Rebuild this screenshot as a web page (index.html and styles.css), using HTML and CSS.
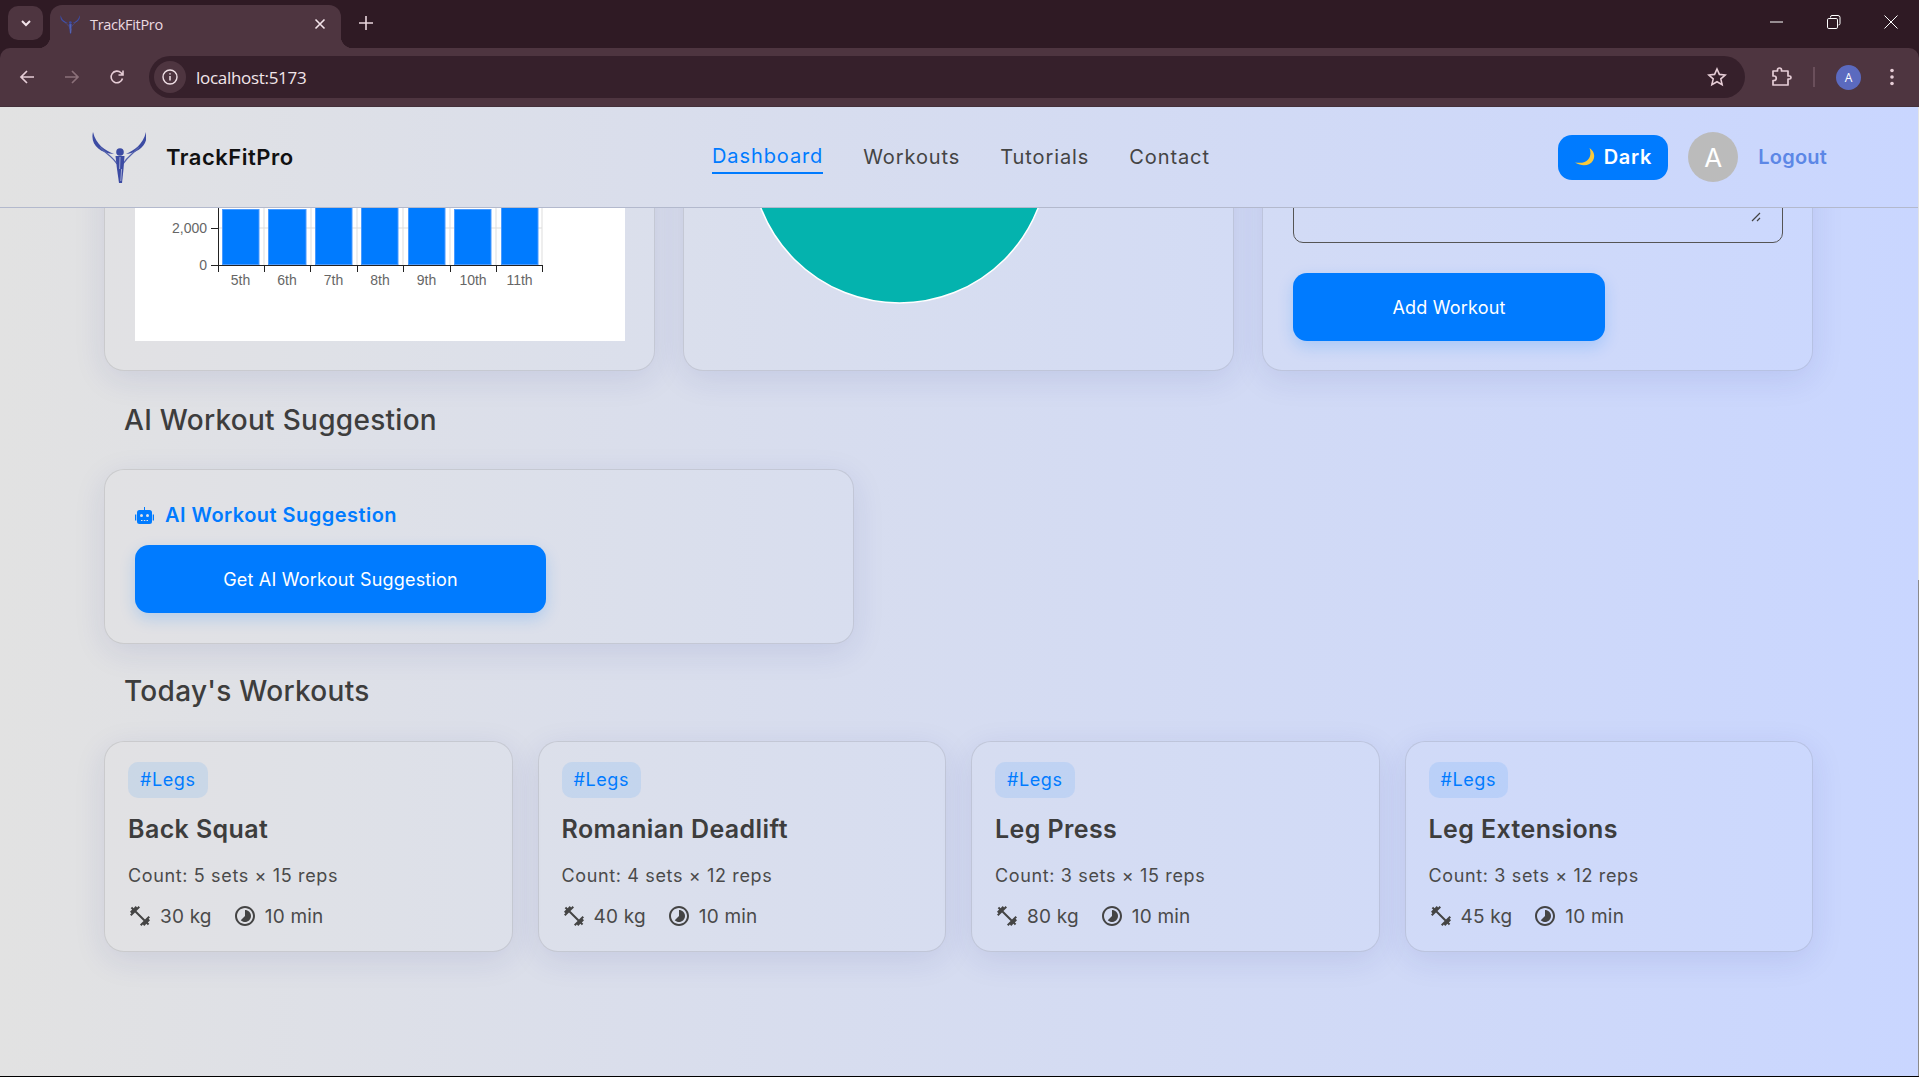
FILE: index.html
```html
<!DOCTYPE html>
<html lang="en">
  <head>
    <meta charset="UTF-8" />
    <title>TrackFitPro</title>
    <link rel="stylesheet" href="styles.css">
  </head>
  <body>
    <svg class="defs" width="0" height="0">
      <symbol id="logo" viewBox="0 0 54 53">
        <path d="M1 1C-2 13 7 22 22 23C13 19 4 14 1 1Z" fill="#3c4ba3" />
        <path d="M54 1C57 13 47 22 34 23C42 19 51 14 54 1Z" fill="#3c4ba3" />
        <path d="M8 16C14 23 20 25 25 33M47 16C41 23 36 25 31 33" fill="none" stroke="#5563ad" stroke-width="1.200" />
        <circle cx="28" cy="21" r="3.800" fill="#3c4ba3" />
        <path d="M23.500 25L32.500 25L31.500 38L30 52L27 52L25 38Z" fill="#3c4ba3" />
        <path d="M28 26L27.600 38M29.600 38L28.800 50" stroke="#cfd3e6" stroke-width=".7" />
      </symbol>
      <symbol id="weight" viewBox="0 0 24 24">
        <path d="M20.57 14.86 22 13.43 20.57 12 17 15.57 8.43 7 12 3.43 10.57 2 9.14 3.43 7.71 2 5.57 4.14 4.14 2.71 2.71 4.14l1.43 1.43L2 7.71l1.43 1.43L2 10.57 3.43 12 7 8.43 15.57 17 12 20.57 13.43 22l1.43-1.43L16.29 22l2.14-2.14 1.43 1.43 1.43-1.43-1.43-1.43L22 16.29z" />
      </symbol>
      <symbol id="timer" viewBox="0 0 24 24">
        <path d="M16.24 7.76C15.07 6.59 13.54 6 12 6v6l-4.24 4.24c2.34 2.34 6.14 2.34 8.49 0 2.34-2.34 2.34-6.14-.01-8.48zM12 2C6.48 2 2 6.48 2 12s4.48 10 10 10 10-4.48 10-10S17.52 2 12 2zm0 18c-4.42 0-8-3.58-8-8s3.58-8 8-8 8 3.58 8 8-3.58 8-8 8z" />
      </symbol>
    </svg>

    <div class="browser">
      <div class="tabstrip">
        <div class="tab-search">
          <svg width="14" height="14" viewBox="0 0 14 14"><path d="M3 5l4 4 4-4" fill="none" stroke="#f3e4ea" stroke-width="2" /></svg>
        </div>
        <div class="tab">
          <svg class="tab-icon" width="20" height="19"><use href="#logo" /></svg>
          <span class="tab-title">TrackFitPro</span>
          <svg class="tab-close" width="12" height="12" viewBox="0 0 12 12"><path d="M1.5 1.5l9 9M10.5 1.5l-9 9" stroke="#f3e4ea" stroke-width="1.6" /></svg>
        </div>
        <svg class="new-tab" width="14" height="14" viewBox="0 0 14 14"><path d="M7 0v14M0 7h14" stroke="#e9d5dc" stroke-width="1.6" /></svg>
        <div class="window-btns">
          <svg width="14" height="14" viewBox="0 0 14 14"><path d="M0 7h13" stroke="#fff" stroke-width="1" /></svg>
          <svg width="14" height="14" viewBox="0 0 14 14"><path d="M3.5 2.5V2a1.5 1.5 0 0 1 1.5-1.5h6A2 2 0 0 1 13 2.500v6A1.500 1.500 0 0 1 11.500 10M1.800 3.500h7.400a1.300 1.300 0 0 1 1.300 1.300v7.400a1.300 1.300 0 0 1-1.300 1.300H1.800a1.300 1.300 0 0 1-1.300-1.300V4.800a1.300 1.300 0 0 1 1.300-1.300z" fill="none" stroke="#fff" /></svg>
          <svg width="14" height="14" viewBox="0 0 14 14"><path d="M.5.500l13 13M13.500.500l-13 13" stroke="#fff" /></svg>
        </div>
      </div>

      <div class="toolbar">
        <svg class="tool" width="16" height="16" viewBox="0 0 16 16"><path d="M15 8H2M8 2L2 8l6 6" fill="none" stroke="#e6cdd6" stroke-width="1.700" /></svg>
        <svg class="tool" width="16" height="16" viewBox="0 0 16 16"><path d="M1 8h13M8 2l6 6-6 6" fill="none" stroke="#8b7079" stroke-width="1.700" /></svg>
        <svg class="tool" width="16" height="16" viewBox="0 0 16 16"><path d="M13.500 9.500A5.800 5.800 0 1 1 12 3.800L14 6M14 1.500V6H9.500" fill="none" stroke="#e6cdd6" stroke-width="1.600" /></svg>
        <div class="omnibox">
          <span class="site-info">
            <svg width="16" height="16" viewBox="0 0 16 16"><circle cx="8" cy="8" r="7" fill="none" stroke="#f0e0e6" stroke-width="1.400" /><path d="M8 7v4.500M8 4.200v1.400" stroke="#f0e0e6" stroke-width="1.500" /></svg>
          </span>
          <span class="url">localhost:5173</span>
          <svg class="star" width="20" height="20" viewBox="0 0 20 20"><path d="M10 2l2.400 5.400 5.800.6-4.400 3.900 1.300 5.800L10 14.700l-5.100 3 1.300-5.800L1.800 8l5.800-.6z" fill="none" stroke="#e6cdd6" stroke-width="1.600" /></svg>
        </div>
        <svg class="ext" width="21" height="20" viewBox="0 0 21 20"><path d="M2 4h4.500V3a2 2 0 0 1 4 0v1H17v5h1.500a1.500 1.500 0 0 1 0 3H17v6H2v-4.500h1a2.200 2.200 0 0 0 0-4.500H2z" fill="none" stroke="#e6cdd6" stroke-width="1.700" stroke-linejoin="round" /></svg>
        <span class="tool-sep"></span>
        <span class="profile">A</span>
        <svg class="kebab" width="4" height="18" viewBox="0 0 4 18"><circle cx="2" cy="2.500" r="1.800" fill="#e6cdd6" /><circle cx="2" cy="9" r="1.800" fill="#e6cdd6" /><circle cx="2" cy="15.500" r="1.800" fill="#e6cdd6" /></svg>
      </div>

      <div class="page">
        <header class="topbar">
          <div class="brand">
            <svg class="brand-logo" width="54" height="53"><use href="#logo" /></svg>
            <span class="brand-name">TrackFitPro</span>
          </div>
          <nav class="nav">
            <a class="nav-link active">Dashboard</a>
            <a class="nav-link">Workouts</a>
            <a class="nav-link">Tutorials</a>
            <a class="nav-link">Contact</a>
          </nav>
          <div class="user-area">
            <button class="theme-btn">
              <svg width="20" height="18" viewBox="0 0 20 18"><path d="M14.500 0C19 3 20.500 8 18 12.500C15.500 17 8 19.500 0 14.500C6 15.500 11 14.500 13.500 11C15.800 7.800 16 4 14.500 0Z" fill="#f8c93c" /></svg>
              Dark
            </button>
            <span class="avatar">A</span>
            <a class="logout">Logout</a>
          </div>
        </header>

        <main class="content">
          <section class="top-grid">
            <div class="card chart-card">
              <svg class="chart" width="490" height="240" viewBox="0 0 490 240">
                <g stroke="#ddd">
                  <path d="M129 0V164M176 0V164M222 0V164M268 0V164M315 0V164M361 0V164M407 0V164" />
                  <path d="M83 127H407" />
                </g>
                <g fill="#007bff" stroke="#4a9bff">
                  <rect x="87.500" y="108.500" width="36.500" height="55" />
                  <rect x="133.500" y="108.500" width="37.500" height="55" />
                  <rect x="180.500" y="90.500" width="36.500" height="73" />
                  <rect x="226.500" y="90.500" width="36.500" height="73" />
                  <rect x="273.500" y="90.500" width="36.500" height="73" />
                  <rect x="319.500" y="108.500" width="36.500" height="55" />
                  <rect x="366.500" y="90.500" width="36.500" height="73" />
                </g>
                <path d="M83.500 0V171M76 127.500H83M76 164.500H407.500M129.500 164V171M175.500 164V171M222.500 164V171M268.500 164V171M315.500 164V171M361.500 164V171M407.500 164V171" fill="none" stroke="#222" />
                <g class="tick-y">
                  <text x="72" y="132">2,000</text>
                  <text x="72" y="169">0</text>
                </g>
                <g class="tick-x">
                  <text x="105.500" y="184">5th</text>
                  <text x="152" y="184">6th</text>
                  <text x="198.500" y="184">7th</text>
                  <text x="245" y="184">8th</text>
                  <text x="291.500" y="184">9th</text>
                  <text x="338" y="184">10th</text>
                  <text x="384.500" y="184">11th</text>
                </g>
              </svg>
            </div>
            <div class="card">
              <svg class="pie" width="490" height="240" viewBox="0 0 490 240">
                <circle cx="185.500" cy="53.400" r="148.600" fill="#04b3ae" stroke="#fff" stroke-width="1.500" />
              </svg>
            </div>
            <div class="card form-card">
              <div class="notes-wrap">
                <textarea class="notes"></textarea>
                <svg class="grip" width="10" height="10" viewBox="0 0 10 10"><path d="M1 9L9 1M6 9L9 6" stroke="#444" stroke-width="1.200" /></svg>
              </div>
              <button class="primary-btn add-btn">Add Workout</button>
            </div>
          </section>

          <h2 class="section-title">AI Workout Suggestion</h2>
          <section class="card ai-card">
            <h3 class="ai-title">
              <svg width="19" height="17" viewBox="0 0 19 17">
                <path d="M9 0h1v3H9zM4.500 3h10A2.500 2.500 0 0 1 17 5.500V14.500A2.500 2.500 0 0 1 14.500 17H4.500A2.500 2.500 0 0 1 2 14.500V5.500A2.500 2.500 0 0 1 4.500 3zM0 7.500h1.300v6H0zM17.700 7.500H19v6h-1.300z" fill="#007bff" />
                <circle cx="6.500" cy="8.500" r="1.500" fill="#dfe1e7" />
                <circle cx="12.500" cy="8.500" r="1.500" fill="#dfe1e7" />
                <path d="M6 13h1.500v1H6zM8.800 13h1.500v1H8.800zM11.500 13H13v1h-1.500z" fill="#dfe1e7" />
              </svg>
              AI Workout Suggestion
            </h3>
            <button class="primary-btn ai-btn">Get AI Workout Suggestion</button>
          </section>

          <h2 class="section-title today-title">Today's Workouts</h2>
          <section class="workout-grid">
            <article class="card workout">
              <span class="tag">#Legs</span>
              <h3 class="workout-name">Back Squat</h3>
              <p class="workout-count">Count: 5 sets × 15 reps</p>
              <div class="workout-meta">
                <svg width="24" height="24"><use href="#weight" /></svg><span>30 kg</span>
                <svg class="meta-clock" width="24" height="24"><use href="#timer" /></svg><span>10 min</span>
              </div>
            </article>
            <article class="card workout">
              <span class="tag">#Legs</span>
              <h3 class="workout-name">Romanian Deadlift</h3>
              <p class="workout-count">Count: 4 sets × 12 reps</p>
              <div class="workout-meta">
                <svg width="24" height="24"><use href="#weight" /></svg><span>40 kg</span>
                <svg class="meta-clock" width="24" height="24"><use href="#timer" /></svg><span>10 min</span>
              </div>
            </article>
            <article class="card workout">
              <span class="tag">#Legs</span>
              <h3 class="workout-name">Leg Press</h3>
              <p class="workout-count">Count: 3 sets × 15 reps</p>
              <div class="workout-meta">
                <svg width="24" height="24"><use href="#weight" /></svg><span>80 kg</span>
                <svg class="meta-clock" width="24" height="24"><use href="#timer" /></svg><span>10 min</span>
              </div>
            </article>
            <article class="card workout">
              <span class="tag">#Legs</span>
              <h3 class="workout-name">Leg Extensions</h3>
              <p class="workout-count">Count: 3 sets × 12 reps</p>
              <div class="workout-meta">
                <svg width="24" height="24"><use href="#weight" /></svg><span>45 kg</span>
                <svg class="meta-clock" width="24" height="24"><use href="#timer" /></svg><span>10 min</span>
              </div>
            </article>
          </section>
        </main>
        <span class="scroll-thumb"></span>
      </div>
    </div>
  </body>
</html>
```

FILE: styles.css
```css
* {
  box-sizing: border-box;
}
html,
body {
  margin: 0;
  height: 1077px;
  overflow: hidden;
}
body {
  font-family: Inter, "Noto Sans", sans-serif;
  color: #3d3d3d;
}
.defs {
  display: block;
  height: 0;
}
button {
  font-family: inherit;
  border: none;
}

/* browser frame */
.browser {
  display: flex;
  flex-direction: column;
  height: 1077px;
  background: #2f1a24;
}
.tabstrip {
  display: flex;
  align-items: flex-end;
  height: 48px;
  padding-left: 8px;
}
.tab-search {
  display: flex;
  align-items: center;
  justify-content: center;
  width: 35px;
  height: 34px;
  margin-bottom: 8px;
  border-radius: 10px;
  background: #4e3540;
}
.tab {
  position: relative;
  display: flex;
  align-items: center;
  width: 291px;
  height: 43px;
  margin-left: 7px;
  padding: 0 15px 5px 10px;
  border-radius: 12px 12px 0 0;
  background: #4e3540;
}
.tab::before,
.tab::after {
  content: "";
  position: absolute;
  bottom: 0;
  width: 12px;
  height: 12px;
}
.tab::before {
  left: -12px;
  background: radial-gradient(circle at 0 0, transparent 12px, #4e3540 12.5px);
}
.tab::after {
  right: -12px;
  background: radial-gradient(circle at 100% 0, transparent 12px, #4e3540 12.5px);
}
.tab-title {
  margin-left: 10px;
  font: 14.5px "Open Sans", sans-serif;
  letter-spacing: -0.3px;
  color: #ecdae0;
}
.tab-close {
  margin-left: auto;
}
.new-tab {
  margin: 0 0 18px 18px;
}
.window-btns {
  display: flex;
  align-items: center;
  gap: 43px;
  margin: 0 21px 19px auto;
}
.toolbar {
  display: flex;
  align-items: center;
  height: 59px;
  padding: 0 25px 0 19px;
  border-radius: 10px 10px 0 0;
  border-bottom: 1px solid #44303a;
  background: #4e3540;
}
.tool {
  flex: none;
  margin-right: 29px;
}
.omnibox {
  display: flex;
  align-items: center;
  flex: none;
  width: 1596px;
  height: 42px;
  margin-left: -5px;
  padding: 0 18px 0 5px;
  border-radius: 21px;
  background: #36202b;
}
.site-info {
  display: flex;
  align-items: center;
  justify-content: center;
  width: 32px;
  height: 32px;
  border-radius: 50%;
  background: #4e3540;
}
.url {
  margin-left: 10px;
  font: 17px "Open Sans", sans-serif;
  letter-spacing: -0.3px;
  color: #f2e6ea;
}
.star {
  margin-left: auto;
}
.ext {
  flex: none;
  margin-left: 26px;
}
.tool-sep {
  width: 2px;
  height: 20px;
  margin-left: 21px;
  background: #6a4f5b;
}
.profile {
  display: flex;
  align-items: center;
  justify-content: center;
  width: 25px;
  height: 25px;
  margin-left: 21px;
  border-radius: 50%;
  background: #5b6abf;
  color: #fff;
  font: 12px "Open Sans", sans-serif;
}
.kebab {
  margin-left: 29px;
}

/* page */
.page {
  position: relative;
  flex: 1;
  min-height: 0;
  display: flex;
  flex-direction: column;
  border-bottom: 1px solid #000;
  border-right: 1px solid transparent;
  background: linear-gradient(to right, #e2e2e2, #c9d6ff);
}
.scroll-thumb {
  position: absolute;
  top: 473px;
  right: -1px;
  bottom: 0;
  width: 1px;
  background: #8a8a8a;
}
.topbar {
  flex: none;
  display: flex;
  align-items: center;
  height: 101px;
  padding: 0 91px 0 92px;
  border-bottom: 1px solid #b3b9cd;
}
.brand {
  display: flex;
  align-items: center;
  gap: 20px;
  width: 620px;
}
.brand-name {
  font-size: 22px;
  font-weight: 600;
  letter-spacing: 0.5px;
  color: #111;
}
.nav {
  display: flex;
  gap: 40px;
}
.nav-link {
  padding: 4px 0 3px;
  border-bottom: 2px solid transparent;
  font-size: 20px;
  letter-spacing: 0.9px;
  color: #444;
}
.nav-link.active {
  color: #007bff;
  border-bottom-color: #007bff;
  margin-top: -1px;
}
.user-area {
  display: flex;
  align-items: center;
  margin-left: auto;
}
.theme-btn {
  display: flex;
  align-items: center;
  justify-content: center;
  gap: 9px;
  width: 110px;
  height: 45px;
  padding-left: 6px;
  border-radius: 14px;
  background: #007bff;
  color: #fff;
  font-size: 20px;
  font-weight: 600;
  letter-spacing: 0.7px;
}
.avatar {
  display: flex;
  align-items: center;
  justify-content: center;
  width: 50px;
  height: 50px;
  margin-left: 20px;
  border-radius: 50%;
  background: #bbb;
  color: #fff;
  font-size: 26px;
}
.logout {
  margin-left: 20px;
  font-size: 20px;
  font-weight: 600;
  letter-spacing: 0.2px;
  color: #5c87e6;
}

.content {
  flex: 1;
  min-height: 0;
  overflow: hidden;
  padding: 0 105px 0 104px;
}
.card {
  border: 1px solid rgba(0, 0, 0, 0.1);
  border-radius: 20px;
  background: rgba(255, 255, 255, 0.03);
  box-shadow: 0 8px 32px rgba(31, 38, 135, 0.1);
}
.top-grid {
  display: grid;
  grid-template-columns: repeat(3, 1fr);
  gap: 28px;
  height: 300px;
  margin-top: -137px;
}
.top-grid .card {
  padding: 29px 29px 29px 30px;
}
.chart,
.pie {
  display: block;
}
.chart {
  background: #fff;
}
.tick-y text {
  font: 14px "Liberation Sans", sans-serif;
  fill: #666;
  text-anchor: end;
}
.tick-x text {
  font: 14px "Liberation Sans", sans-serif;
  fill: #666;
  text-anchor: middle;
}
.form-card {
  display: flex;
  flex-direction: column;
  align-items: flex-start;
}
.notes-wrap {
  position: relative;
  width: 490px;
  height: 142px;
}
.notes {
  display: block;
  width: 100%;
  height: 100%;
  border: 1px solid #555;
  border-radius: 10px;
  background: transparent;
  resize: none;
}
.grip {
  position: absolute;
  right: 22px;
  bottom: 21px;
}
.primary-btn {
  border-radius: 14px;
  background: #007bff;
  color: #fff;
  font-size: 18px;
  font-weight: 400;
  letter-spacing: 0.2px;
  box-shadow: 0 6px 16px rgba(0, 123, 255, 0.2);
}
.add-btn {
  width: 312px;
  height: 68px;
  margin-top: 30px;
}
.section-title {
  height: 42px;
  margin: 28px 0 28px 20px;
  font-size: 28px;
  line-height: 42px;
  font-weight: 500;
  letter-spacing: 0.28px;
  color: #3d3d3d;
}
.today-title {
  margin-top: 26px;
  margin-bottom: 29px;
}
.ai-card {
  width: 750px;
  height: 175px;
  padding: 30px;
}
.ai-title {
  display: flex;
  align-items: center;
  gap: 11px;
  height: 30px;
  margin: 0;
  font-size: 20px;
  font-weight: 600;
  letter-spacing: 0.47px;
  color: #007bff;
}
.ai-btn {
  display: block;
  width: 411px;
  height: 68px;
  margin-top: 15px;
}
.workout-grid {
  display: grid;
  grid-template-columns: repeat(4, 1fr);
  gap: 25px;
}
.workout {
  height: 211px;
  padding: 20px 23px;
}
.tag {
  display: inline-block;
  height: 36px;
  padding: 0 12px;
  border-radius: 10px;
  background: rgba(0, 123, 255, 0.1);
  font-size: 18px;
  line-height: 36px;
  letter-spacing: 0.6px;
  color: #007bff;
}
.workout-name {
  margin: 12px 0 0;
  font-size: 25px;
  line-height: 38px;
  font-weight: 600;
  letter-spacing: 0.4px;
  color: #3d3d3d;
}
.workout-count {
  margin: 14px 0 0;
  font-size: 18px;
  line-height: 28px;
  letter-spacing: 0.64px;
  color: #4a4a4a;
}
.workout-meta {
  display: flex;
  align-items: center;
  gap: 8px;
  height: 28px;
  margin-top: 12px;
  font-size: 19px;
  letter-spacing: 0.2px;
  color: #4a4a4a;
}
.workout-meta svg {
  fill: #444;
}
.meta-clock {
  margin-left: 13px;
}
```
